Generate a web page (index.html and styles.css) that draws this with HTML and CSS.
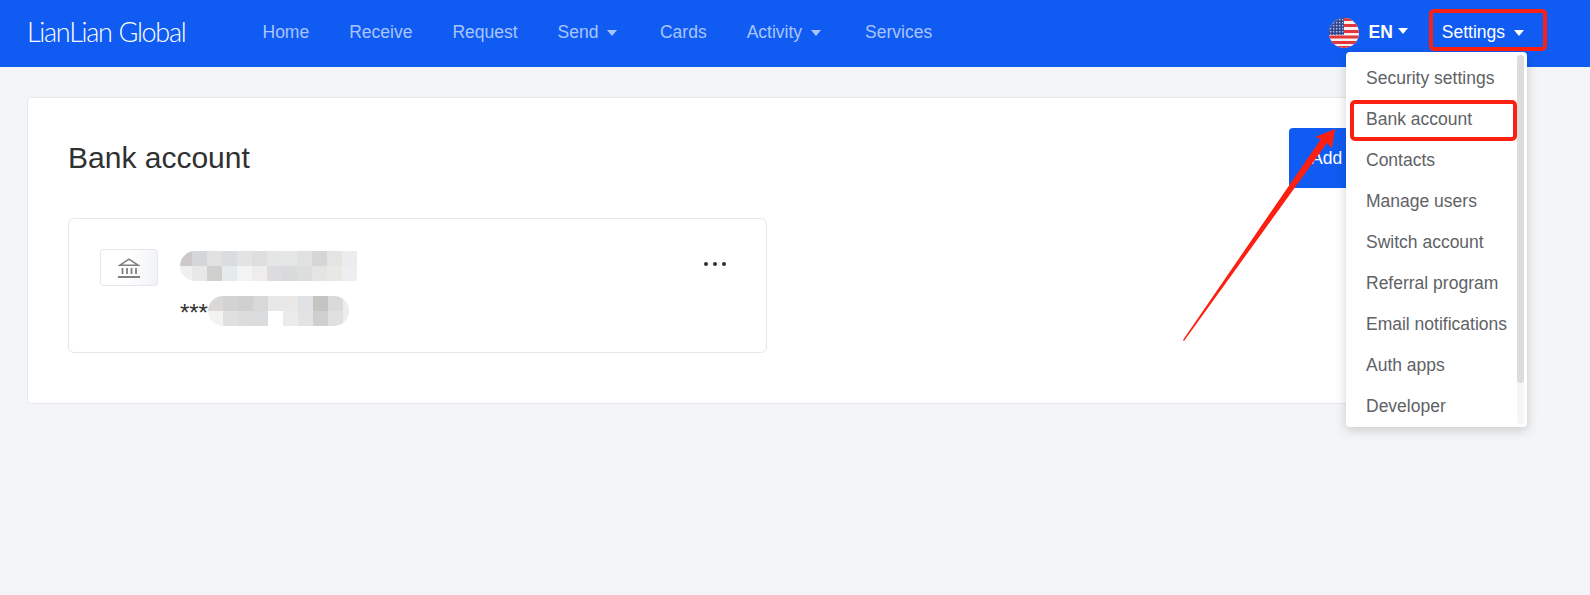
FILE: index.html
```html
<!DOCTYPE html>
<html lang="en">
<head>
  <meta charset="UTF-8" />
  <title>LianLian Global - Bank account</title>
  <link rel="stylesheet" href="styles.css">
</head>
<body>

  <header>
    <div class="logo">LianLian Global</div>
    <nav class="main-nav">
      <a>Home</a>
      <a>Receive</a>
      <a>Request</a>
      <a class="has-caret send-link">Send<i class="caret"></i></a>
      <a>Cards</a>
      <a class="has-caret">Activity<i class="caret"></i></a>
      <a>Services</a>
    </nav>
    <div class="header-right">
      <svg class="flag" width="30" height="30" viewBox="0 0 30 30">
        <defs>
          <clipPath id="flag-clip"><circle cx="15" cy="15" r="15"/></clipPath>
          <pattern id="flag-stars" width="3" height="3" patternUnits="userSpaceOnUse">
            <rect x="1" y="1" width="1.4" height="1.4" fill="#aebbe6"/>
          </pattern>
        </defs>
        <g clip-path="url(#flag-clip)">
          <rect width="30" height="30" fill="#f6f1f1"/>
          <rect y="0" width="30" height="3" fill="#e4363a"/>
          <rect y="6" width="30" height="3" fill="#e4363a"/>
          <rect y="12" width="30" height="3" fill="#e4363a"/>
          <rect y="17.5" width="30" height="3" fill="#e4363a"/>
          <rect y="23" width="30" height="3" fill="#e4363a"/>
          <rect y="28" width="30" height="2" fill="#e4363a"/>
          <rect width="15" height="17" fill="#33478f"/>
          <rect width="15" height="17" fill="url(#flag-stars)"/>
        </g>
      </svg>
      <span class="lang">EN</span><i class="caret caret-lang"></i>
      <a class="settings-link">Settings<i class="caret"></i></a>
    </div>
  </header>

  <section class="content">
    <div class="panel">
      <div class="panel-head">
        <h1>Bank account</h1>
        <button class="add-btn">Add</button>
      </div>

      <div class="bank-card">
        <div class="bank-icon">
          <svg width="22" height="20" viewBox="0 0 22 20" fill="none" stroke="#808080">
            <path d="M2 7.2 11 1.2 20 7.2Z" stroke-width="1.6"/>
            <path d="M4.5 10v6M9 10v6M13.5 10v6M18 10v6" stroke-width="1.8"/>
            <path d="M0 19h22" stroke-width="2"/>
          </svg>
        </div>
        <div class="bank-info">
          <svg class="mask" width="177" height="30" viewBox="0 0 177 30">
            <defs>
              <clipPath id="mask-name"><path d="M15 0H177V30H15A15 15 0 0 1 15 0Z"/></clipPath>
            </defs>
            <g clip-path="url(#mask-name)">
              <rect x="0" width="12" height="15" fill="#cdc9c9"/><rect x="12" width="15" height="15" fill="#d3d7da"/><rect x="27" width="15" height="15" fill="#e2e1df"/><rect x="42" width="15" height="15" fill="#d9dde0"/><rect x="57" width="15" height="15" fill="#e3e3e3"/><rect x="72" width="15" height="15" fill="#dfdddd"/><rect x="87" width="15" height="15" fill="#e4e5e7"/><rect x="102" width="15" height="15" fill="#e5e7e7"/><rect x="117" width="15" height="15" fill="#e0e2e1"/><rect x="132" width="15" height="15" fill="#d6d6d7"/><rect x="147" width="15" height="15" fill="#e4e4e2"/><rect x="162" width="15" height="15" fill="#ebecee"/>
              <rect x="0" y="15" width="12" height="15" fill="#efefef"/><rect x="12" y="15" width="15" height="15" fill="#e8e8e8"/><rect x="27" y="15" width="15" height="15" fill="#d2d0ce"/><rect x="42" y="15" width="15" height="15" fill="#e5ebea"/><rect x="57" y="15" width="15" height="15" fill="#f2f4f3"/><rect x="72" y="15" width="15" height="15" fill="#eeedeb"/><rect x="87" y="15" width="15" height="15" fill="#dcdcde"/><rect x="102" y="15" width="15" height="15" fill="#d9dadb"/><rect x="117" y="15" width="15" height="15" fill="#dcdedd"/><rect x="132" y="15" width="15" height="15" fill="#e4e5e3"/><rect x="147" y="15" width="15" height="15" fill="#e8e8e6"/><rect x="162" y="15" width="15" height="15" fill="#eceef0"/>
            </g>
          </svg>
          <div class="account-row">
            <span class="stars">***</span>
            <svg class="mask" width="141" height="30" viewBox="0 0 141 30">
              <defs>
                <clipPath id="mask-number"><rect width="141" height="30" rx="15"/></clipPath>
              </defs>
              <g clip-path="url(#mask-number)">
                <rect x="0" width="15" height="15" fill="#dad9d8"/><rect x="15" width="15" height="15" fill="#d3d3d3"/><rect x="30" width="15" height="15" fill="#d0d0d0"/><rect x="45" width="15" height="15" fill="#d9d8d6"/><rect x="60" width="15" height="15" fill="#e6e7e8"/><rect x="75" width="15" height="15" fill="#e9e8e6"/><rect x="90" width="15" height="15" fill="#dfe1e3"/><rect x="105" width="15" height="15" fill="#c4c4c2"/><rect x="120" width="15" height="15" fill="#dbd9da"/><rect x="135" width="6" height="15" fill="#ececec"/>
                <rect x="0" y="15" width="15" height="15" fill="#f3f3f2"/><rect x="15" y="15" width="15" height="15" fill="#e0e0e0"/><rect x="30" y="15" width="15" height="15" fill="#dcdcdc"/><rect x="45" y="15" width="15" height="15" fill="#d9dbdd"/><rect x="60" y="15" width="15" height="15" fill="#ffffff"/><rect x="75" y="15" width="15" height="15" fill="#eaecec"/><rect x="90" y="15" width="15" height="15" fill="#e3e3e3"/><rect x="105" y="15" width="15" height="15" fill="#cfcfcd"/><rect x="120" y="15" width="15" height="15" fill="#e0e0e0"/><rect x="135" y="15" width="6" height="15" fill="#ededed"/>
              </g>
            </svg>
          </div>
        </div>
        <div class="more-dots"><i></i><i></i><i></i></div>
      </div>
    </div>
  </section>

  <ul class="settings-menu">
    <li>Security settings</li>
    <li>Bank account</li>
    <li>Contacts</li>
    <li>Manage users</li>
    <li>Switch account</li>
    <li>Referral program</li>
    <li>Email notifications</li>
    <li>Auth apps</li>
    <li>Developer</li>
    <li class="scroll-track"><span class="scroll-thumb"></span></li>
  </ul>

  <!-- red annotations on top of the screenshot -->
  <div class="note-box note-settings"></div>
  <div class="note-box note-bank"></div>
  <svg class="note-arrow" width="170" height="225" viewBox="0 0 170 225">
    <polygon points="3,221 141,20 135,18 155,10 152,29 147,24 4,222" fill="#fb2012"/>
  </svg>

</body>
</html>
```

FILE: styles.css
```css
body {
  margin: 0;
  font-family: "Liberation Sans", Arial, sans-serif;
  font-size: 17.5px;
  background-color: #f4f5f7;
  min-height: 595px;
  overflow: hidden;
}

header {
  display: flex;
  align-items: center;
  height: 67px;
  padding-left: 27px;
  background-color: #105cf3;
}

.logo {
  width: 212px;
  margin-top: -5px;
  color: #fff;
  font-family: Lato, sans-serif;
  font-weight: 300;
  font-size: 27px;
  letter-spacing: -1.3px;
  word-spacing: 1px;
  white-space: nowrap;
}

.main-nav {
  display: flex;
  align-items: center;
  flex: 1;
  gap: 40px;
  margin-top: -2px;
  padding-left: 23.5px;
  color: #a9c5fb;
}

.main-nav a {
  display: flex;
  align-items: center;
}

.send-link {
  margin-right: 2.5px;
}

.main-nav .has-caret:not(.send-link) {
  margin-right: 4px;
}

.caret {
  display: inline-block;
  width: 0;
  height: 0;
  margin-left: 9px;
  border-left: 5px solid transparent;
  border-right: 5px solid transparent;
  border-top: 6px solid currentColor;
}

.header-right {
  display: flex;
  align-items: center;
  margin-top: -2px;
  padding-right: 66px;
  color: #fff;
}

.lang {
  margin-left: 9px;
  font-weight: bold;
}

.caret-lang {
  margin-left: 5px;
  margin-top: -4px;
}

.settings-link {
  display: flex;
  align-items: center;
  margin-left: 34px;
}

.content {
  padding: 30px 68px 0 27px;
}

.panel {
  box-sizing: border-box;
  height: 307px;
  padding: 30px 40px;
  background-color: #fff;
  border: 1px solid #e6e8ee;
  border-radius: 4px;
}

.panel-head {
  display: flex;
  justify-content: space-between;
  align-items: center;
}

.panel-head h1 {
  margin: 0;
  font-size: 30px;
  font-weight: normal;
  color: #303133;
}

.add-btn {
  width: 192px;
  height: 60px;
  padding: 0 0 0 22px;
  text-align: left;
  color: #fff;
  background-color: #105cf3;
  border: none;
  border-radius: 4px;
  font-family: inherit;
  font-size: 17.5px;
}

.bank-card {
  display: flex;
  box-sizing: border-box;
  width: 699px;
  height: 135px;
  margin-top: 30px;
  padding: 30px 40px 30px 31px;
  background-color: #fff;
  border: 1px solid #e4e7ed;
  border-radius: 6px;
}

.bank-icon {
  display: flex;
  align-items: center;
  justify-content: center;
  width: 58px;
  height: 37px;
  box-sizing: border-box;
  background: linear-gradient(100deg, #fff 45%, #f1f2f5 100%);
  border: 1px solid #e4e7ed;
  border-radius: 3px;
}

.bank-info {
  flex: 1;
  margin: 2px 0 0 22px;
}

.mask {
  display: block;
}

.account-row {
  display: flex;
  align-items: center;
  margin-top: 15px;
}

.stars {
  width: 28px;
  font-size: 24px;
  line-height: 22px;
  letter-spacing: -0.1px;
  padding-top: 4px;
  color: #303133;
}

.more-dots {
  display: flex;
  gap: 5px;
  margin-top: 13px;
}

.more-dots i {
  width: 4px;
  height: 4px;
  background-color: #303133;
  border-radius: 50%;
}

.settings-menu {
  position: absolute;
  top: 52px;
  left: 1346px;
  width: 181px;
  height: 375px;
  box-sizing: border-box;
  margin: 0;
  padding: 6px 0 0 20px;
  list-style: none;
  color: #606266;
  background-color: #fff;
  border-radius: 4px;
  box-shadow: 0 3px 12px rgba(0, 0, 0, 0.18);
}

.settings-menu li {
  height: 41px;
  line-height: 41px;
  white-space: nowrap;
}

.settings-menu .scroll-track {
  position: absolute;
  top: 3px;
  right: 3px;
  width: 7px;
  height: 369px;
  background-color: #f6f6f6;
  border-radius: 4px;
}

.scroll-thumb {
  display: block;
  height: 328px;
  background-color: #dcdcdc;
  border-radius: 4px;
}

.note-box {
  position: absolute;
  box-sizing: border-box;
  border: 4px solid #fb2012;
  border-radius: 5px;
}

.note-settings {
  top: 9px;
  left: 1429px;
  width: 118px;
  height: 42px;
}

.note-bank {
  top: 100px;
  left: 1350px;
  width: 167px;
  height: 41px;
}

.note-arrow {
  position: absolute;
  top: 119px;
  left: 1180px;
}
```
